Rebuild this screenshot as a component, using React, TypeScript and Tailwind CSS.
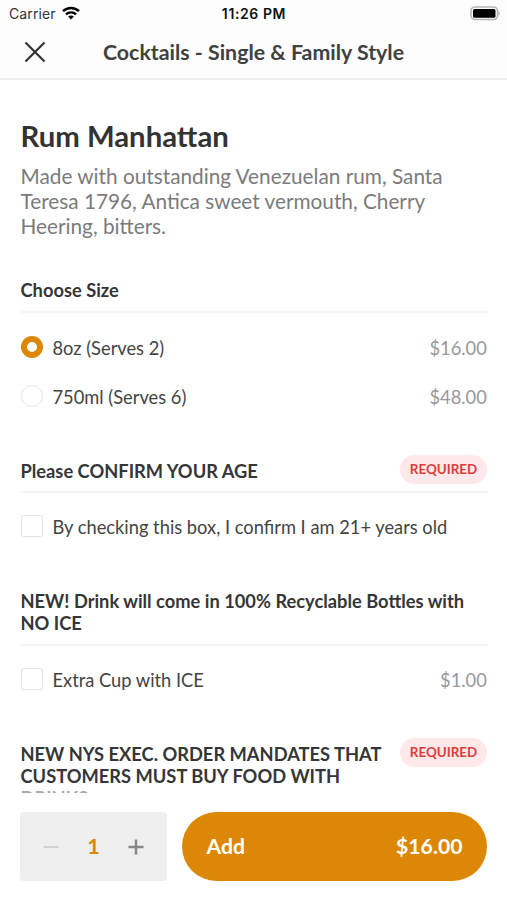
import type { ReactNode } from "react";

function StatusBar() {
  return (
    <div className="grid h-[26px] grid-cols-3 items-center pl-[9px] pr-[8px] font-['Inter','Liberation_Sans',sans-serif] text-[14px] text-[#111]">
      <div className="flex items-center gap-[6px]">
        <span className="tracking-[0.1px] text-[#333]">Carrier</span>
        <svg width="18" height="14" viewBox="0 0 18 14" fill="none" stroke="#000" strokeWidth="2.4">
          <path d="M1 5.2C5.5 .9 12.500 .9 17 5.200" />
          <path d="M4 8.400C6.800 5.700 11.200 5.700 14 8.400" />
          <path d="M9 13.500 6.100 10.600C7.700 9.100 10.300 9.100 11.900 10.600Z" fill="#000" stroke="none" />
        </svg>
      </div>
      <span className="whitespace-nowrap text-center font-semibold tracking-[0.6px]">11:26 PM</span>
      <svg className="mr-[-1px] justify-self-end" width="31" height="15" viewBox="0 0 31 15">
        <rect x="2" y="1" width="26.500" height="12.500" rx="4" fill="#fff" stroke="#b5b5b5" strokeWidth="1.600" />
        <rect x="4" y="3" width="22.500" height="8.800" rx="1.600" fill="#000" />
        <path d="M29.500 5.200C31.200 6 31.200 8.800 29.500 9.600Z" fill="#aaa" />
      </svg>
    </div>
  );
}

function Badge() {
  return (
    <span className="mr-[0.5px] flex h-[29px] w-[87px] shrink-0 items-center justify-center rounded-full bg-[#ffe8e9] text-[13.400px] font-bold text-[#dc3d3c]">
      REQUIRED
    </span>
  );
}

function Option({ control, label, price }: { control: ReactNode; label: string; price?: string }) {
  return (
    <div className="flex h-[49px] items-center">
      {control}
      <span className="ml-[10px] flex-1 pt-[2px] text-[18.300px] leading-[24px] text-[#444]">{label}</span>
      {price && <span className="mr-[0.7px] pt-[2px] text-[18.300px] leading-[24px] text-[#999]">{price}</span>}
    </div>
  );
}

function Radio({ checked = false }: { checked?: boolean }) {
  return checked ? (
    <span className="size-[22px] rounded-full border-[6px] border-[#dc8705] bg-white" />
  ) : (
    <span className="size-[22px] rounded-full border-[1.500px] border-[#e3e3e3] bg-white" />
  );
}

function Checkbox() {
  return <span className="size-[22px] rounded-[3px] border-[1.500px] border-[#e3e3e3] bg-white" />;
}

export default function App() {
  return (
    <div className="flex h-[900px] w-[507px] flex-col overflow-hidden bg-white font-['Lato','Carlito',sans-serif] text-[#363636]">
      <header className="h-[80px] shrink-0 border-b-2 border-[#eee] bg-[#fdfdfd]">
        <StatusBar />
        <div className="grid h-[52px] grid-cols-[70px_1fr_70px] items-center">
          <svg className="ml-[24px]" width="22" height="22" viewBox="0 0 22 22" stroke="#333" strokeWidth="2.200">
            <path d="M1.500 1.500 20.500 20.500M20.500 1.500 1.500 20.500" />
          </svg>
          <h1 className="whitespace-nowrap text-center text-[21.350px] font-bold text-[#404040]">Cocktails - Single &amp; Family Style</h1>
        </div>
      </header>

      <main className="h-[713px] shrink-0 overflow-hidden pl-[20.500px] pr-[19.500px]">
        <h2 className="mt-[38px] h-[36px] text-[29.300px] font-bold leading-[36px] text-[#333]">Rum Manhattan</h2>
        <p className="mt-[10px] text-[20.770px] leading-[25px] text-[#7b7b7b]">
          Made with outstanding Venezuelan rum, Santa<br />Teresa 1796, Antica sweet vermouth, Cherry<br />Heering, bitters.
        </p>

        <section className="mt-[40px]">
          <h3 className="h-[34px] border-b-2 border-[#f5f5f5] text-[18.300px] font-bold leading-[22px]">Choose Size</h3>
          <div className="pt-[9px]">
            <Option control={<Radio checked />} label="8oz (Serves 2)" price="$16.00" />
            <Option control={<Radio />} label="750ml (Serves 6)" price="$48.00" />
          </div>
        </section>

        <section className="mt-[35px]">
          <div className="flex h-[38px] justify-between border-b-2 border-[#f5f5f5]">
            <h3 className="pt-[5px] text-[18.300px] font-bold leading-[22px]">Please CONFIRM YOUR AGE</h3>
            <Badge />
          </div>
          <div className="pt-[8px]">
            <Option control={<Checkbox />} label="By checking this box, I confirm I am 21+ years old" />
          </div>
        </section>

        <section className="mt-[40px]">
          <h3 className="h-[56px] border-b-2 border-[#f5f5f5] text-[18.300px] font-bold leading-[22px]">
            NEW! Drink will come in 100% Recyclable Bottles with<br />NO ICE
          </h3>
          <div className="pt-[8px]">
            <Option control={<Checkbox />} label="Extra Cup with ICE" price="$1.00" />
          </div>
        </section>

        <section className="mt-[35px] flex justify-between">
          <h3 className="whitespace-nowrap pt-[5px] text-[18.300px] font-bold leading-[22px]">
            NEW NYS EXEC. ORDER MANDATES THAT<br />CUSTOMERS MUST BUY FOOD WITH<br /><span className="text-[#aaa]">DRINKS</span>
          </h3>
          <Badge />
        </section>
      </main>

      <footer className="flex h-[107px] shrink-0 gap-[15px] bg-white pl-[20px] pr-[20px] pt-[19px]">
        <div className="flex h-[69px] w-[147px] items-center justify-between rounded-[4px] bg-[#efefef] px-[22px]">
          <svg width="18" height="18" viewBox="0 0 18 18" stroke="#d2d2d2" strokeWidth="2"><path d="M1.500 9H16.500" /></svg>
          <span className="text-[21.600px] font-bold text-[#dc8705]">1</span>
          <svg width="18" height="18" viewBox="0 0 18 18" stroke="#888" strokeWidth="2.500"><path d="M1.500 9H16.500M9 1.500V16.500" /></svg>
        </div>
        <button className="flex h-[69px] flex-1 items-center justify-between rounded-full bg-[#dc8705] px-[24.500px] text-[21.200px] font-bold text-white">
          <span>Add</span>
          <span>$16.00</span>
        </button>
      </footer>
    </div>
  );
}
